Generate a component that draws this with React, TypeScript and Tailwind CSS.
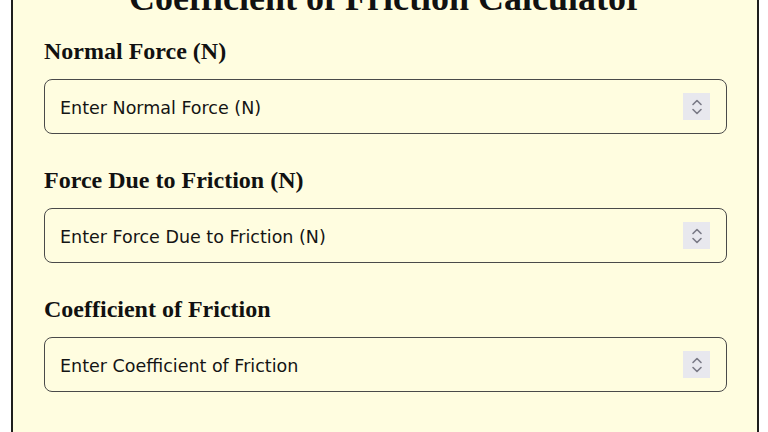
import React from "react";

const serif = { fontFamily: '"Liberation Serif", "Times New Roman", serif' };
const sans = { fontFamily: '"DejaVu Sans", Verdana, sans-serif' };

function Spinner() {
  return (
    <div className="flex h-[27px] w-[27px] flex-col items-center justify-center gap-[2px] bg-[#e8e8ee]">
      <svg width="12" height="8" viewBox="0 0 12 8" fill="none">
        <path d="M2 6.5 L6 2.5 L10 6.5" stroke="#7a7a86" strokeWidth="1.6" strokeLinecap="round" strokeLinejoin="round" />
      </svg>
      <svg width="12" height="8" viewBox="0 0 12 8" fill="none">
        <path d="M2 1.5 L6 5.5 L10 1.5" stroke="#7a7a86" strokeWidth="1.6" strokeLinecap="round" strokeLinejoin="round" />
      </svg>
    </div>
  );
}

function Field({ label, placeholder }: { label: string; placeholder: string }) {
  return (
    <div className="flex flex-col">
      <label className="text-[24px] font-bold leading-[28px] text-[#111]" style={serif}>
        {label}
      </label>
      <div className="mt-[14px] flex h-[55px] items-center justify-between rounded-[8px] border border-[#4a4a4a] pl-[15px] pr-[16px]">
        <span className="mt-[3px] text-[17.5px] text-[#141414]" style={sans}>
          {placeholder}
        </span>
        <Spinner />
      </div>
    </div>
  );
}

export default function App() {
  return (
    <div className="h-[432px] w-[768px] overflow-hidden bg-white">
      <div className="ml-[11px] mr-[9px] mt-[-26px] border-2 border-[#1e1e1e] bg-[#fffde0] pl-[31px] pr-[30px] pb-[40px]">
        <h1 className="text-center text-[36px] font-bold leading-[44px] text-[#111]" style={serif}>
          Coefficient of Friction Calculator
        </h1>
        <div className="mt-[17px] flex flex-col gap-[32px]">
          <Field label="Normal Force (N)" placeholder="Enter Normal Force (N)" />
          <Field label="Force Due to Friction (N)" placeholder="Enter Force Due to Friction (N)" />
          <Field label="Coefficient of Friction" placeholder="Enter Coefficient of Friction" />
        </div>
      </div>
    </div>
  );
}
